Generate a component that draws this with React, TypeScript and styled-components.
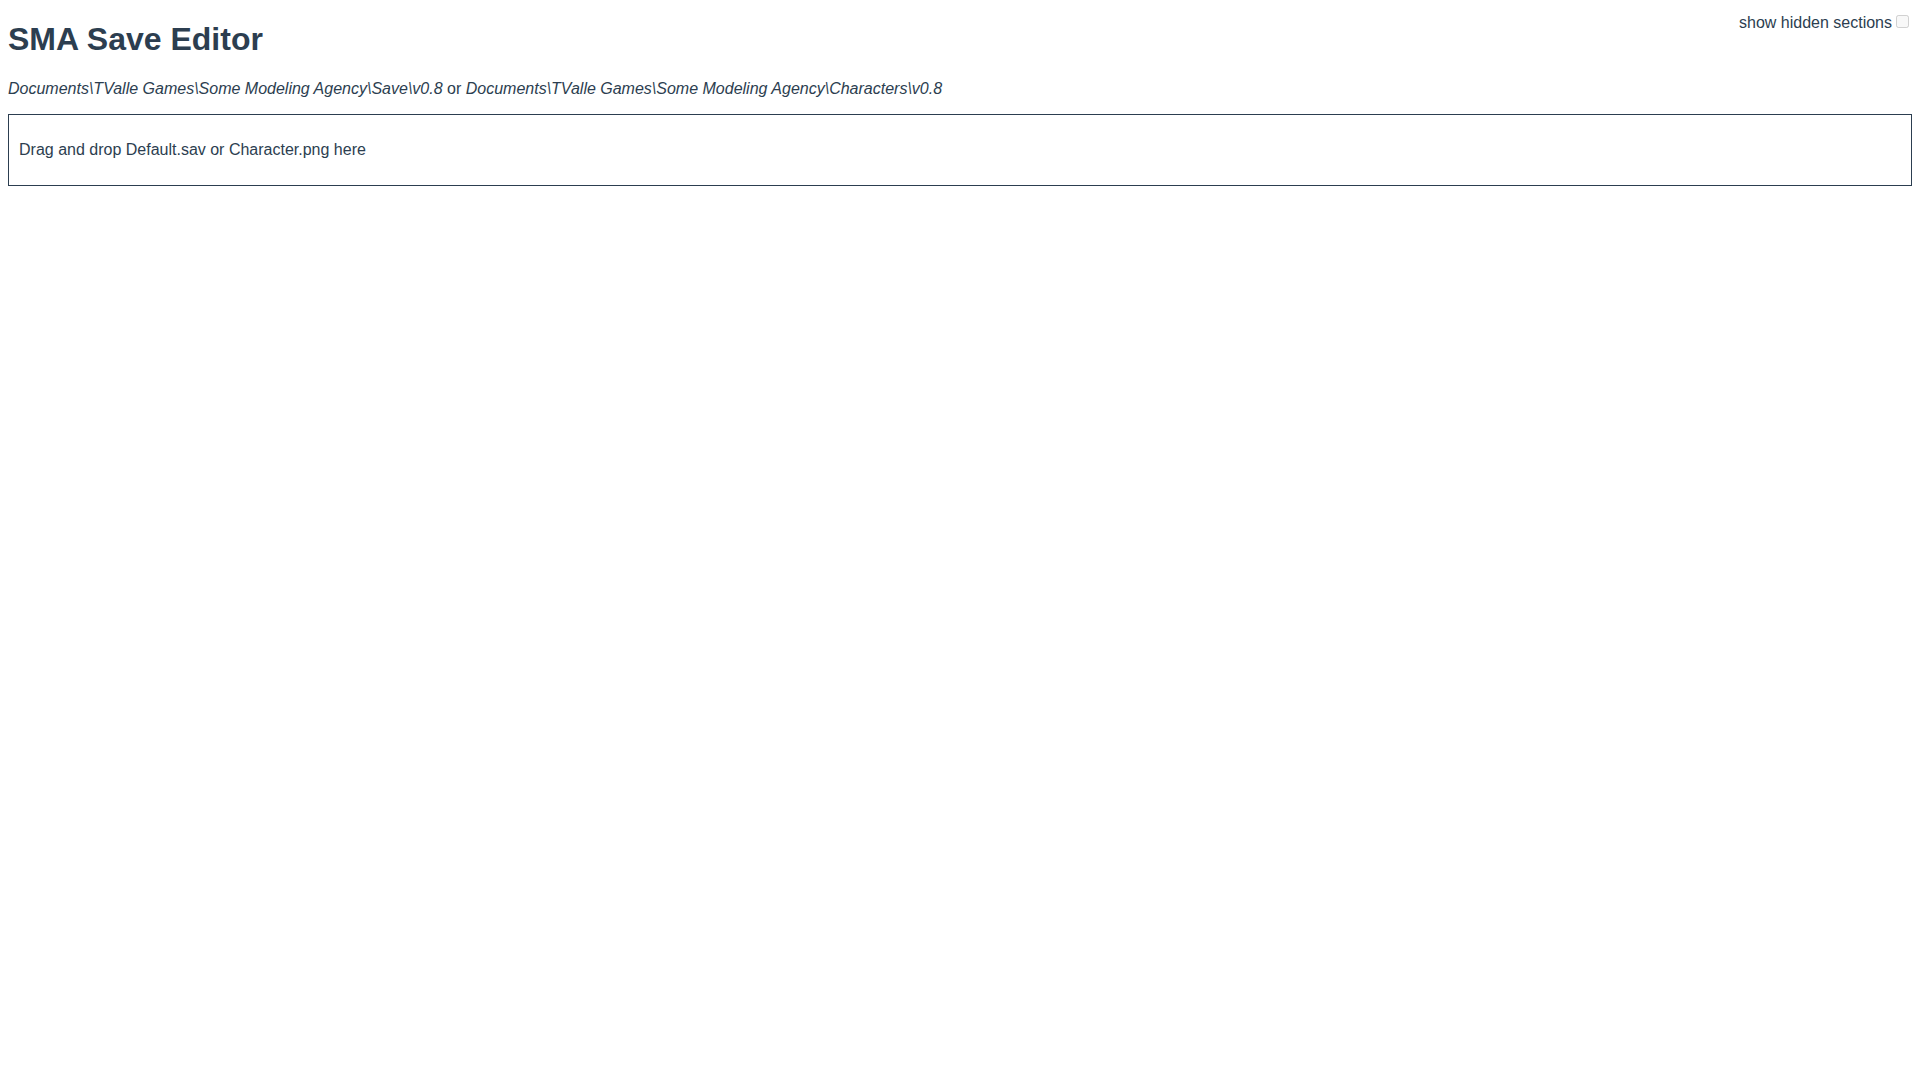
import styled, { createGlobalStyle } from "styled-components"

const GlobalStyle = createGlobalStyle`
    body {
        margin: 8px;
        background: #fff;
        font-family: "Liberation Sans", Arial, Helvetica, sans-serif;
        color: #2c3e50;
        -webkit-font-smoothing: antialiased;
    }
`

const Header = styled.header`
    display: flex;
    justify-content: space-between;
    align-items: flex-start;
`

const Title = styled.h1`
    font-size: 32px;
    font-weight: 700;
    margin: 13.44px 0 21.44px;
`

const Toggle = styled.label`
    margin-top: 3.5px;
    font-size: 16px;

    input {
        margin: 3px 3px 3px 4px;
    }
`

const Paths = styled.p`
    font-size: 16px;
    margin: 0 0 16px;

    em {
        font-style: italic;
    }
`

const DropZone = styled.div`
    border: 1px solid #2c3e50;
    padding: 10px;

    p {
        margin: 16px 0;
        font-size: 16px;
    }
`

export default function App() {
    return (
        <>
            <GlobalStyle />
            <Header>
                <Title>SMA Save Editor</Title>
                <Toggle>
                    show hidden sections<input type="checkbox" disabled />
                </Toggle>
            </Header>

            <Paths>
                <em>Documents\TValle Games\Some Modeling Agency\Save\v0.8</em> or{" "}
                <em>Documents\TValle Games\Some Modeling Agency\Characters\v0.8</em>
            </Paths>

            <DropZone>
                <p>Drag and drop Default.sav or Character.png here</p>
            </DropZone>
        </>
    )
}
